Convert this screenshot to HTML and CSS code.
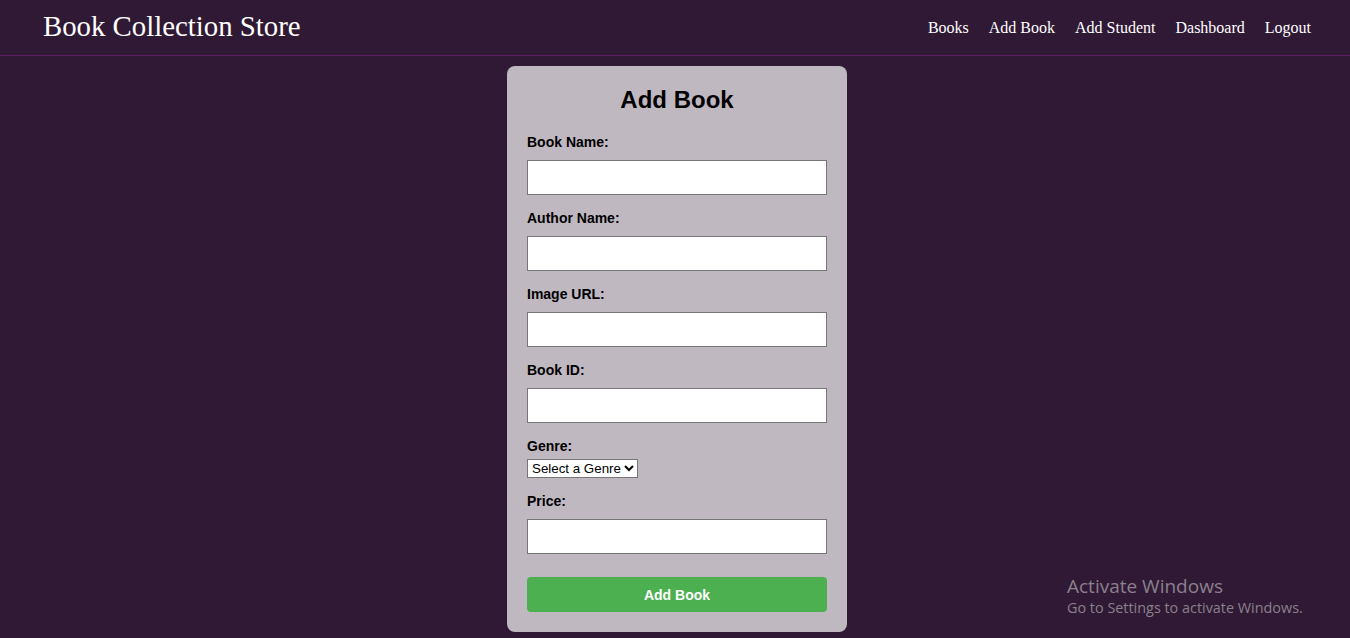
FILE: index.html
```html
<!DOCTYPE html>
<html lang="en">
<head>
<meta charset="utf-8">
<title>Add Book</title>
<link rel="stylesheet" href="styles.css">
</head>
<body>
<header class="topbar">
  <h1 class="brand">Book Collection Store</h1>
  <nav class="nav">
    <a href="#">Books</a>
    <a href="#">Add Book</a>
    <a href="#">Add Student</a>
    <a href="#">Dashboard</a>
    <a href="#">Logout</a>
  </nav>
</header>
<main class="page">
  <form class="card">
    <h2 class="card-title">Add Book</h2>
    <label class="field-label">Book Name:</label>
    <input class="field-input" type="text">
    <label class="field-label">Author Name:</label>
    <input class="field-input" type="text">
    <label class="field-label">Image URL:</label>
    <input class="field-input" type="text">
    <label class="field-label">Book ID:</label>
    <input class="field-input" type="text">
    <label class="field-label">Genre:</label>
    <select class="field-select">
      <option>Select a Genre</option>
    </select>
    <label class="field-label">Price:</label>
    <input class="field-input" type="text">
    <button class="submit" type="button">Add Book</button>
  </form>
</main>
<div class="watermark">
  <div class="wm-title">Activate Windows</div>
  <div class="wm-sub">Go to Settings to activate Windows.</div>
</div>
</body>
</html>
```

FILE: styles.css
```css
html, body {
  margin: 0;
  padding: 0;
}
body {
  background: #301934;
  font-family: "Liberation Serif", "Times New Roman", serif;
  min-height: 638px;
  overflow: hidden;
}
.topbar {
  height: 55px;
  border-bottom: 1px solid #5b1d60;
  display: flex;
  align-items: center;
  justify-content: space-between;
  padding: 0 39px 0 43px;
  box-sizing: content-box;
}
.brand {
  margin: 0;
  font-size: 28.8px;
  font-weight: normal;
  color: #ffffff;
  line-height: 1;
  padding-bottom: 2px;
}
.nav {
  display: flex;
  gap: 20px;
}
.nav a {
  color: #ffffff;
  text-decoration: none;
  font-size: 16px;
}
.page {
  display: flex;
  justify-content: center;
  padding: 10px 0 0 4px;
}
.card {
  width: 300px;
  padding: 20px;
  background: #c0b8c1;
  border-radius: 8px;
  display: flex;
  flex-direction: column;
  align-items: flex-start;
  font-family: "Liberation Sans", Arial, sans-serif;
}
.card-title {
  margin: 0 0 20px;
  align-self: stretch;
  text-align: center;
  font-size: 24px;
  line-height: 28px;
  font-weight: bold;
  color: #000;
}
.field-label {
  font-size: 14px;
  line-height: 16px;
  font-weight: bold;
  color: #000;
  margin-bottom: 5px;
}
.field-input {
  box-sizing: border-box;
  width: 300px;
  height: 35px;
  margin: 5px 0 15px;
  border: 1px solid #767676;
  background: #fff;
  padding: 8px;
}
.field-select {
  height: 19px;
  margin: 0 0 15px;
  font-family: "Liberation Sans", Arial, sans-serif;
  font-size: 13.33px;
  border: 1px solid #767676;
  border-radius: 0;
  background: #fff;
  color: #000;
  padding: 0;
}
.submit {
  margin-top: 8px;
  width: 300px;
  height: 35px;
  border: none;
  border-radius: 4px;
  background: #4caf50;
  color: #fff;
  font-family: "Liberation Sans", Arial, sans-serif;
  font-size: 14px;
  font-weight: bold;
  cursor: pointer;
}
.watermark {
  position: absolute;
  left: 1067px;
  top: 574px;
  color: #8b808e;
  font-family: "Open Sans", "Noto Sans", sans-serif;
}
.wm-title {
  font-size: 19px;
  line-height: 24px;
}
.wm-sub {
  font-size: 14.4px;
  line-height: 20px;
}
```
